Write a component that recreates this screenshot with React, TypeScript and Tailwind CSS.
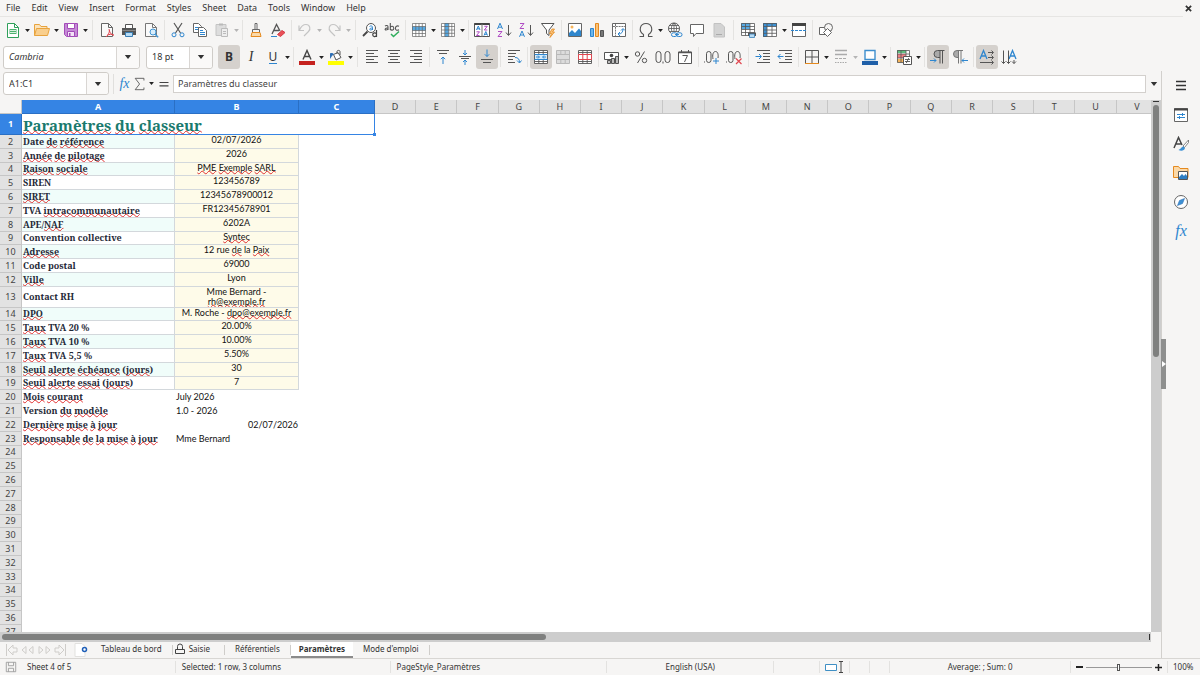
import type { ReactNode } from 'react';

const icons: Record<string, ReactNode> = {
  new: (
    <>
      <path d="M2.5 1.5h7l4 4v10h-11z" fill="#fff" stroke="#2fa05a" />
      <path d="M9.5 1.5v4h4" fill="none" stroke="#2fa05a" />
      <path d="M4.5 7h7v5h-7z" fill="#4db36f" />
      <path d="M5 8.5h6M5 10.5h6" stroke="#d9f2e0" />
    </>
  ),
  open: (
    <>
      <path d="M.5 13.5v-11h5l1.500 2h6v3" fill="#fbe3bb" stroke="#e8a33d" />
      <path d="M.5 13.500l2-7h13l-2 7z" fill="#f9cf8e" stroke="#e8a33d" />
    </>
  ),
  save: (
    <>
      <path d="M1.500 1.500h13v13h-11l-2-2z" fill="#c58ad6" stroke="#a34bb8" />
      <path d="M4.500 1.500h7v5h-7z" fill="#fff" stroke="#a34bb8" />
      <path d="M4.500 9.500h7v5h-7z" fill="#f3e3f7" stroke="#a34bb8" />
      <path d="M6 11h1.500v3H6z" fill="#a34bb8" />
    </>
  ),
  pdf: (
    <>
      <path d="M2.500 1.500h7l4 4v9h-11z" fill="#fafafa" stroke="#666" />
      <path d="M9.500 1.500v4h4" fill="none" stroke="#666" />
      <path d="M10 7c.5 3 1.500 5 4.500 6.500M10.500 8c0 3-1.500 5-3.500 7M8 13.500c2-1.500 5-1.500 7-.5" fill="none" stroke="#e0464f" />
    </>
  ),
  print: (
    <>
      <path d="M4.500 6V2.500h7V6" fill="#fff" stroke="#555" />
      <path d="M1 6h14v7H1z" fill="#555" />
      <path d="M1.500 8.500h13" stroke="#888" />
      <path d="M4.500 10.500h7v4h-7z" fill="#b6dbf5" stroke="#3b7fb5" />
    </>
  ),
  preview: (
    <>
      <path d="M2.500 1.500h7l4 4v9h-11z" fill="#fafafa" stroke="#777" />
      <path d="M9.500 1.500v4h4" fill="none" stroke="#777" />
      <circle cx="10" cy="10" r="3" fill="#d8edfb" stroke="#3f94d4" />
      <path d="M12.200 12.200l3 3" stroke="#3f94d4" strokeWidth="1.400" />
    </>
  ),
  cut: (
    <>
      <path d="M4 1l6.500 10M12 1L5.500 11" fill="none" stroke="#555" strokeWidth="1.200" />
      <circle cx="4" cy="12.800" r="2" fill="none" stroke="#2e86cf" />
      <circle cx="12" cy="12.800" r="2" fill="none" stroke="#2e86cf" />
    </>
  ),
  copy: (
    <>
      <path d="M1.500 1.500h5l3 3v6h-8z" fill="#fff" stroke="#666" />
      <path d="M3 5.500h4M3 7.500h3" stroke="#2e86cf" />
      <path d="M6.500 5.500h5l3 3v6h-8z" fill="#fff" stroke="#666" />
      <path d="M8 8.500h3M8 10.500h5M8 12.500h5" stroke="#2e86cf" />
    </>
  ),
  paste: (
    <>
      <path d="M2 2.500h10v11H2z" fill="#ddd" stroke="#c4c4c4" />
      <path d="M5 1.500h4v2H5z" fill="#b9b9b9" />
      <path d="M7.500 6.500h6v8h-6z" fill="#eee" stroke="#bbb" />
      <path d="M9 9.500h3M9 11.500h3" stroke="#bbb" />
    </>
  ),
  brush: (
    <>
      <path d="M7 1.500h2v6H7z" fill="#fff" stroke="#666" />
      <path d="M4.500 7.500h7v3h-7z" fill="#f3f3f3" stroke="#666" />
      <path d="M4 10.500h8l1 4H3z" fill="#fbd9a8" stroke="#e58a1f" />
    </>
  ),
  clear: (
    <>
      <path d="M2 12L6.500 2.500 10 9M4 8.500h5" fill="none" stroke="#555" strokeWidth="1.300" />
      <path d="M7.500 12.500l4.500-4 3 2-4.500 4z" fill="#ea5058" stroke="#d43c46" />
      <path d="M1 14.500h6" stroke="#2e86cf" />
    </>
  ),
  undo: <path d="M2 3.500v5h5M2.500 8C4 4.500 6.500 2.500 9 2.500c4 0 5 4.500 2.500 7l-4.500 4.500" fill="none" stroke="#c4c4c4" strokeWidth="1.200" />,
  redo: <path d="M14 3.500v5H9M13.500 8C12 4.500 9.500 2.500 7 2.500c-4 0-5 4.500-2.500 7L9 14" fill="none" stroke="#c4c4c4" strokeWidth="1.200" />,
  find: (
    <>
      <circle cx="9" cy="6" r="4.500" fill="#fff" stroke="#555" />
      <path d="M5.500 9.500L1 14" stroke="#444" strokeWidth="1.800" />
      <path d="M7.500 4.500c1-1 3-.8 3 .8V8M10.500 6c-3-.3-3.500 2-1.800 2 1 0 1.800-.8 1.800-1.500" fill="none" stroke="#2e86cf" />
      <path d="M14.500 8v7M14.500 12c-.8-2-3.800-1.200-3.800.8s3 2.500 3.800.5" fill="none" stroke="#444" strokeWidth="1.200" />
    </>
  ),
  spell: (
    <>
      <path d="M1 4c1-.8 3-.8 3 .8V8M4 6C.8 5.700.5 8 2 8c1 0 2-.8 2-1.500M6.300 1v7M6.300 5.500c.7-2 3.500-1.500 3.500.7S7 8.800 6.300 7M15 4.300c-2-1-3.600 0-3.600 2s1.800 2.500 3.600 1.500" fill="none" stroke="#555" strokeWidth="1.100" />
      <path d="M7 12l2.500 2.500L15 9.500" fill="none" stroke="#2fae5c" strokeWidth="1.500" />
    </>
  ),
  rows: (
    <>
      <path d="M1.500 1.500h13v13h-13z" fill="#fff" />
      <path d="M1 4.500h14v4H1z" fill="#57a9e3" />
      <path d="M1.500 1.500h13v13h-13zM1.500 4.500h13M1.500 8.500h13M1.500 11.500h13M4.800 1.500v13M8 1.500v13M11.300 1.500v13" fill="none" stroke="#666" strokeWidth=".7" />
    </>
  ),
  cols: (
    <>
      <path d="M1.500 1.500h13v13h-13z" fill="#fff" />
      <path d="M4.800 1h4v14h-4z" fill="#57a9e3" />
      <path d="M1.500 1.500h13v13h-13zM1.500 4.500h13M1.500 8h13M1.500 11.300h13M4.800 1.500v13M8.800 1.500v13M11.800 1.500v13" fill="none" stroke="#666" strokeWidth=".7" />
    </>
  ),
  sort: (
    <>
      <path d="M.5 1.500h15v13H.5z" fill="#fff" stroke="#555" />
      <path d="M.5 2h15" stroke="#444" strokeWidth="2" />
      <path d="M8 2v13" stroke="#777" />
      <path d="M2.500 8l1.800-4 1.700 4M3 6.800h2.500M10 13.500l1.800-4 1.700 4M10.500 12.300h2.500" fill="none" stroke="#2e86cf" />
      <path d="M2.500 9.800h3l-3 3.700h3M10.300 4.300h3l-3 3.700h3" fill="none" stroke="#b04cc4" />
    </>
  ),
  asc: (
    <>
      <path d="M1.500 7L4 1.200 6.500 7M2.300 5.200h3.400" fill="none" stroke="#2e86cf" />
      <path d="M2 9.500h4L2 14.500h4" fill="none" stroke="#b04cc4" />
      <path d="M12.500 3v10M10 10.500l2.500 3 2.500-3" fill="none" stroke="#555" />
    </>
  ),
  desc: (
    <>
      <path d="M1.500 14.800L4 9l2.500 5.800M2.300 13h3.400" fill="none" stroke="#2e86cf" />
      <path d="M2 1.500h4L2 6.500h4" fill="none" stroke="#b04cc4" />
      <path d="M12.500 3v10M10 10.500l2.500 3 2.500-3" fill="none" stroke="#555" />
    </>
  ),
  filter: (
    <>
      <path d="M1.500 1.500h12.500L9 8v5.500l-2.500-2V8z" fill="#fff" stroke="#555" />
      <path d="M12 7l-2.500 4.500h2L10 15.500l4.500-5.500h-2l2-3z" fill="#f9c27a" stroke="#e58a1f" strokeWidth=".8" />
    </>
  ),
  image: (
    <>
      <path d="M1.500 1.500h13v13h-13z" fill="#fff" stroke="#666" />
      <circle cx="5" cy="5" r="1.500" fill="#f7b55b" />
      <path d="M2 14v-3l3-3 3 3 4-4.500L14 9v5z" fill="#2f86cc" />
    </>
  ),
  chart: (
    <>
      <path d="M1.500 6.500h3v8h-3z" fill="#6db6ea" stroke="#2e86cf" />
      <path d="M6.500 1.500h3v13h-3z" fill="#f9c27a" stroke="#e58a1f" />
      <path d="M11.500 8.500h3v6h-3z" fill="#777" stroke="#555" />
    </>
  ),
  pivot: (
    <>
      <path d="M1.500 1.500h13v13h-13z" fill="#fff" stroke="#666" />
      <path d="M2 4.500h12M4.500 2v12" stroke="#777" strokeDasharray="2 .8" />
      <path d="M7.500 12c3 0 4.500-2 4.500-5M9 10l-2 2 2 2M10 8.500l2-2 2 2" fill="none" stroke="#2e86cf" />
    </>
  ),
  omega: <path d="M1.500 14.500h4v-2C0 9 2 1.500 8 1.500S16 9 10.500 12.500v2h4" fill="none" stroke="#555" strokeWidth="1.100" />,
  link: (
    <>
      <circle cx="7" cy="6.500" r="5.500" fill="#fff" stroke="#555" />
      <path d="M1.500 6.500h11M2.500 3.500h9M2.500 9.500h9M7 1v11M7 1C3.500 4 3.500 9 7 12M7 1c3.500 3 3.500 8 0 11" fill="none" stroke="#555" strokeWidth=".8" />
      <path d="M4 10h11v6H4z" fill="#f6f5f4" />
      <rect x="4.500" y="10.800" width="5.500" height="3.700" rx="1.800" fill="none" stroke="#2e86cf" />
      <rect x="9.500" y="10.800" width="5.500" height="3.700" rx="1.800" fill="none" stroke="#2e86cf" />
      <path d="M8 12.600h4" stroke="#2e86cf" />
    </>
  ),
  comment: <path d="M1.500 2.500h13v9H7l-2.500 3v-3h-3z" fill="#fff" stroke="#666" />,
  header: (
    <>
      <path d="M3 1.500h7l3.500 3.500v10H3z" fill="#d3d3d3" stroke="#c2c2c2" />
      <path d="M5 12.500h6" stroke="#aaa" />
    </>
  ),
  printRange: (
    <>
      <path d="M1.500 1.500h13v12h-13z" fill="#fff" />
      <path d="M1 1h9v6H1z" fill="#57a9e3" />
      <path d="M1.500 1.500h13v12h-13zM1.500 4.500h13M1.500 7.500h13M1.500 10.500h13M5.500 1.500v12M10 1.500v12" fill="none" stroke="#555" strokeWidth=".8" />
      <path d="M8 10.500h8v3.500H8z" fill="#555" />
      <path d="M9.500 12h5v3.500h-5z" fill="#b6dbf5" stroke="#3b7fb5" strokeWidth=".8" />
    </>
  ),
  freeze: (
    <>
      <path d="M1.500 1.500h13v13h-13z" fill="#fff" />
      <path d="M1 1h14v3.500H5V15H1z" fill="#3d91d4" />
      <path d="M1.500 1.500h13v13h-13zM1.500 4.500h13M1.500 8h13M1.500 11.300h13M5 1.500v13M10 1.500v13" fill="none" stroke="#555" strokeWidth=".8" />
    </>
  ),
  split: (
    <>
      <path d="M1.500 1.500h13v13h-13z" fill="#fff" stroke="#666" />
      <path d="M1 2.500h14" stroke="#444" strokeWidth="3" />
      <path d="M0 8.500h16" stroke="#2e86cf" strokeDasharray="3 1" />
    </>
  ),
  shapes: (
    <>
      <path d="M1.500 5.500h6v7h-6z" fill="#fff" stroke="#666" />
      <circle cx="10.500" cy="5.500" r="4" fill="#f6f5f4" stroke="#666" />
      <path d="M9.500 6.500l4 4-4 4-4-4z" fill="#fff" stroke="#666" />
    </>
  ),
  fontColor: (
    <>
      <path d="M4 10.500L8 1.500l4 9M5.300 7.500h5.400" fill="none" stroke="#444" strokeWidth="1.400" />
      <path d="M0 12h16v4H0z" fill="#c5221f" />
    </>
  ),
  fill: (
    <>
      <path d="M5.500 5.500l4.500-2 3 5-5 2.500z" fill="#fff" stroke="#555" />
      <path d="M9 5V2.500c0-1.500 3-1.500 3 0V6" fill="none" stroke="#555" />
      <path d="M2 10V4.500c1.500-1 3 0 4 .5L4 7z" fill="#2e6fb5" />
      <path d="M0 12h16v4H0z" fill="#ffff00" />
    </>
  ),
  left: <path d="M2 1.500h12M2 4.500h8M2 7.500h12M2 10.500h8M2 13.500h12" stroke="#555" />,
  center: <path d="M2 1.500h12M4 4.500h8M2 7.500h12M4 10.500h8M2 13.500h12" stroke="#555" />,
  right: <path d="M2 1.500h12M6 4.500h8M2 7.500h12M6 10.500h8M2 13.500h12" stroke="#555" />,
  top: (
    <>
      <path d="M2 1.500h12M4 4.500h8" stroke="#555" />
      <path d="M8 15V8M5.800 10.200L8 8l2.200 2.200" fill="none" stroke="#2e86cf" />
    </>
  ),
  middle: (
    <>
      <path d="M2 7.500h12M4 9.500h8" stroke="#555" />
      <path d="M8 1v5M6 4l2 2 2-2M8 16v-5M6 13l2-2 2 2" fill="none" stroke="#2e86cf" />
    </>
  ),
  bottom: (
    <>
      <path d="M2 10.500h12M4 13.500h8" stroke="#555" />
      <path d="M8 .5v7M5.800 5.300L8 7.500l2.200-2.200" fill="none" stroke="#2e86cf" />
    </>
  ),
  wrap: (
    <>
      <path d="M2 1.500h12M2 4.500h8M2 7.500h7M2 10.500h5M2 13.500h7" stroke="#555" />
      <path d="M9 8.500c3 0 4.500 1.500 4.500 5M11 11.500l2.500 2.500 2-2.500" fill="none" stroke="#2e86cf" />
    </>
  ),
  merge: (
    <>
      <path d="M1.500 1.500h13v13h-13z" fill="#fff" />
      <path d="M1 5.500h14v5H1z" fill="#d6ebfa" />
      <path d="M1.500 1.500h13v13h-13zM5.800 1.500v4M10.200 1.500v4M5.800 10.500v4M10.200 10.500v4M1.500 3.500h13M1.500 12.500h13" fill="none" stroke="#555" strokeWidth=".9" />
      <path d="M1.500 5.500h13M1.500 10.500h13M3 8h3M13 8h-3M5 6.500L6.500 8 5 9.500M11 6.500L9.500 8l1.500 1.500" fill="none" stroke="#2e86cf" />
    </>
  ),
  mergeOff: (
    <path d="M1.500 1.500h13v13h-13zM1.500 5.500h13M1.500 10.500h13M5.800 1.500v4M10.200 1.500v4M5.800 10.500v4M10.200 10.500v4" fill="#dcdcdc" stroke="#b9b9b9" />
  ),
  unmerge: (
    <>
      <path d="M1.500 1.500h13v13h-13zM5.800 1.500v4M10.200 1.500v4M5.800 10.500v4M10.200 10.500v4M1.500 3.500h13M1.500 12.500h13" fill="#fff" stroke="#555" strokeWidth=".9" />
      <path d="M1.500 5.500h13v5h-13zM5.800 5.500v5M10.200 5.500v5" fill="#fff" stroke="#e0464f" />
    </>
  ),
  currency: (
    <>
      <path d="M.5 3.500h14v7H.5z" fill="#fff" stroke="#555" />
      <circle cx="7.500" cy="6.500" r="1.800" fill="#444" />
      <path d="M3.500 11.500h3v3h-3zM7.500 9.500h3v5h-3zM11.500 7.500h3v7h-3z" fill="#bbb" stroke="#444" strokeWidth=".9" />
    </>
  ),
  percent: (
    <>
      <circle cx="4.500" cy="5" r="2.200" fill="none" stroke="#555" />
      <circle cx="11.500" cy="11.500" r="2.200" fill="none" stroke="#555" />
      <path d="M11.500 2.500l-7 11.500" stroke="#555" />
    </>
  ),
  number: (
    <>
      <rect x="1" y="2.500" width="5" height="11" rx="2.500" fill="none" stroke="#555" />
      <rect x="10" y="2.500" width="5" height="11" rx="2.500" fill="none" stroke="#555" />
      <path d="M7.500 12.500h1v2h-1z" fill="#555" />
    </>
  ),
  date: (
    <>
      <path d="M1.500 3h13v11.500h-13z" fill="#fff" stroke="#555" />
      <path d="M1.500 3.500h13" stroke="#555" strokeWidth="1.500" />
      <path d="M4.500 1v3M11.500 1v3" stroke="#555" />
      <path d="M5.500 6.500h5l-3 6.500" fill="none" stroke="#555" />
    </>
  ),
  addDecimal: (
    <>
      <path d="M0 12.500h1v1H0z" fill="#555" />
      <rect x="2.500" y="2.500" width="4.500" height="11" rx="2.200" fill="none" stroke="#555" />
      <path d="M9 10c-.8-4 0-7.500 2.500-7.500S14.500 6 14 9" fill="none" stroke="#555" />
      <path d="M12 9v6M9 12h6" stroke="#2e86cf" />
    </>
  ),
  delDecimal: (
    <>
      <path d="M0 12.500h1v1H0z" fill="#555" />
      <rect x="2.500" y="2.500" width="4.500" height="11" rx="2.200" fill="none" stroke="#555" />
      <path d="M9 10c-.8-4 0-7.500 2.500-7.500S14.500 6 14 9" fill="none" stroke="#555" />
      <path d="M10 9.500l5.500 5.500M15.500 9.500L10 15" stroke="#e0464f" strokeWidth="1.200" />
    </>
  ),
  indent: (
    <>
      <path d="M2 1.500h13M8 4.500h7M8 7.500h7M8 10.500h7M2 13.500h13" stroke="#555" />
      <path d="M.5 7.500h5.500M4 5l2.500 2.500L4 10" fill="none" stroke="#2e86cf" />
    </>
  ),
  outdent: (
    <>
      <path d="M2 1.500h13M8 4.500h7M8 7.500h7M8 10.500h7M2 13.500h13" stroke="#555" />
      <path d="M6.500 7.500H1M3.500 5L1 7.500 3.500 10" fill="none" stroke="#2e86cf" />
    </>
  ),
  borders: (
    <>
      <path d="M1.500 14.500v-13h13v13M8 1.500v13M1.500 8h13" fill="none" stroke="#555" />
      <path d="M1 14.500h14" stroke="#e58a1f" />
    </>
  ),
  lineStyle: (
    <>
      <path d="M2 1.500h12M2 5.500h12" stroke="#aaa" strokeWidth="1.400" />
      <path d="M2 9.500h12" stroke="#aaa" strokeDasharray="3 1" />
      <path d="M2 13.500h12" stroke="#aaa" strokeDasharray="1.500 1" />
    </>
  ),
  borderColor: (
    <>
      <path d="M3 1.500h10v9H3z" fill="#fff" stroke="#3f8fce" strokeWidth="1.400" />
      <path d="M0 12h16v4H0z" fill="#1f5fa8" />
    </>
  ),
  conditional: (
    <>
      <path d="M1.500 1.500h12v12h-12z" fill="#fff" />
      <path d="M1 1h9v3H1z" fill="#5fbf7f" />
      <path d="M1 5h9v4H1z" fill="#ec7f84" />
      <path d="M1 10h6v3.500H1z" fill="#f7b55b" />
      <path d="M1.500 1.500h12v12h-12zM1.500 5h12M1.500 9h12M5 1.500v12M10 1.500v12" fill="none" stroke="#555" strokeWidth=".8" />
      <path d="M7.500 7.500h8v8h-8z" fill="#fff" stroke="#555" />
      <path d="M9 10.500h5M9 12.500h5M12.800 9l-2.500 5" stroke="#555" strokeWidth=".9" />
    </>
  ),
  ltr: (
    <>
      <path d="M10 1.500H7.500a3.500 3.500 0 000 7H10z" fill="#aaa" />
      <path d="M14.500 1.500H7.500a3.500 3.500 0 000 7H10M10 1.500v13M12.500 1.500v13" fill="none" stroke="#555" />
      <path d="M0 11.500h6M4 9.500l2 2-2 2" fill="none" stroke="#2e86cf" />
    </>
  ),
  rtl: (
    <>
      <path d="M6.500 1.500H5a3.500 3.500 0 000 7h1.500z" fill="#aaa" />
      <path d="M11 1.500H5a3.500 3.500 0 000 7h1.500M6.500 1.500v13M9 1.500v13" fill="none" stroke="#777" />
      <path d="M16 11.500h-6M12 9.500l-2 2 2 2" fill="none" stroke="#2e86cf" />
    </>
  ),
  textLtr: (
    <>
      <path d="M1 10L4.500 1.500 8 10M2.300 7h4.400" fill="none" stroke="#2e86cf" strokeWidth="1.300" />
      <path d="M9 3.500h5M12.500 1.500l2 2-2 2M9 8.500h5M12.500 6.500l2 2-2 2M1 13.500h13M12.500 11.500l2 2-2 2" fill="none" stroke="#555" />
    </>
  ),
  textTtb: (
    <>
      <path d="M8 10l3.500-8.500L15 10M9.300 7h4.400" fill="none" stroke="#2e86cf" strokeWidth="1.300" />
      <path d="M2.500 1.500v13M.5 12.500l2 2 2-2M7.500 1.500v13M5.500 12.500l2 2 2-2M13 11v3.500M11 12.500l2 2 2-2" fill="none" stroke="#555" />
    </>
  ),
  sum: <path d="M12.500 4V1.500h-10l5 6.500-5 6.500h10V12" fill="none" stroke="#555" />,
  equals: <path d="M2 6h12M2 10.500h12" stroke="#444" strokeWidth="1.600" />,
  menu: <path d="M3 3.500h10M3 7.500h10M3 11.500h10" stroke="#333" strokeWidth="1.500" />,
  properties: (
    <>
      <path d="M1.500 1.500h13v13h-13z" fill="#fff" stroke="#666" />
      <path d="M1 2.500h14" stroke="#444" strokeWidth="2" />
      <path d="M4 7.500h8M9.500 6v3M4 10.500h8M6.500 9v3" stroke="#2e86cf" />
    </>
  ),
  styles: (
    <>
      <path d="M1 12L5.500 1.500 9 9M2.800 8h5" fill="none" stroke="#444" strokeWidth="1.500" />
      <path d="M15.500 4L10 10l1.500 1.500 4-5z" fill="#fff" stroke="#666" strokeWidth=".8" />
      <path d="M10.500 10.500c-2 0-2.500 2.500-5 3.500 3 1.500 6 .5 6.500-2z" fill="#3d91d4" />
    </>
  ),
  gallery: (
    <>
      <path d="M.5 12.500v-11h5l1.500 2h8v9z" fill="#fbd9a8" stroke="#e58a1f" />
      <path d="M5.500 6.500h9v8h-9z" fill="#fff" stroke="#555" />
      <path d="M6 14v-2l3-3 2 2 1.500-2L14 11v3z" fill="#2f7fc4" />
    </>
  ),
  navigator: (
    <>
      <circle cx="8" cy="8" r="6.500" fill="#fff" stroke="#666" />
      <path d="M11.500 4.500L9.500 9.500l-5 2 2-5z" fill="#3d91d4" stroke="#2e6fb5" strokeWidth=".6" />
    </>
  ),
};

function Icon({ name }: { name: string }) {
  return (
    <svg viewBox="0 0 16 16" className="size-4 shrink-0" aria-hidden="true">
      {icons[name]}
    </svg>
  );
}

function Caret({ muted = false }: { muted?: boolean }) {
  return (
    <svg viewBox="0 0 8 5" className="h-[3px] w-[5px]" aria-hidden="true">
      <path d="M0 0h8L4 5z" fill={muted ? '#b5b5b5' : '#222'} />
    </svg>
  );
}

// "|" is a wide separator, "." a narrow one, "v" / "x" an enabled / disabled arrow
const standardBar =
  'new v open v save v | pdf print preview . cut copy paste x . brush clear . undo x redo x | find spell . rows v cols v . sort asc desc filter . image chart pivot . omega v link comment header | printRange freeze v split . shapes';
const formatBar =
  'fontColor v fill v | left center right . top middle *bottom . wrap . *merge mergeOff unmerge . currency v percent number date . addDecimal delDecimal | indent outdent . borders v lineStyle x borderColor v . conditional v . *ltr rtl . *textLtr textTtb';

function ToolItems({ spec }: { spec: string }) {
  return spec.split(' ').map((item, i) => {
    if (item === '|' || item === '.') {
      return (
        <span key={i} className={`flex h-5 shrink-0 justify-center ${item === '|' ? 'w-[7px]' : 'w-[5px]'}`}>
          <span className="w-px bg-[#e4e3e1]" />
        </span>
      );
    }
    if (item === 'v' || item === 'x') {
      return (
        <button key={i} aria-label="More options" disabled={item === 'x'} className="flex h-5 w-[7px] shrink-0 items-center justify-center">
          <Caret muted={item === 'x'} />
        </button>
      );
    }
    const active = item.startsWith('*');
    const name = item.replace('*', '');
    return (
      <button
        key={i}
        aria-label={name}
        className={`flex h-6 w-[22px] shrink-0 items-center justify-center rounded-[3px] ${active ? 'bg-[#d5d1cd]' : ''}`}
      >
        <Icon name={name} />
      </button>
    );
  });
}

function Combo({ label, value, className, textClass = '' }: { label: string; value: string; className: string; textClass?: string }) {
  return (
    <label className={`relative flex h-[23px] shrink-0 items-center rounded-[3px] border border-[#cfccc8] bg-white ${className}`}>
      <select aria-label={label} className={`size-full appearance-none bg-transparent pl-[5px] outline-none ${textClass}`}>
        <option>{value}</option>
      </select>
      <span className="pointer-events-none absolute inset-y-0 right-0 flex w-[23px] items-center justify-center rounded-r-[3px] border-l border-[#d9d6d3] bg-[#faf9f8]">
        <svg viewBox="0 0 8 5" className="h-1 w-2"><path d="M0 0h8L4 5z" fill="#333" /></svg>
      </span>
    </label>
  );
}

// words between asterisks are unknown to the spell checker
function Spelled({ text }: { text: string }) {
  return text.split('*').map((part, i) =>
    i % 2 ? (
      <span key={i} className="underline decoration-[#e03030] decoration-wavy decoration-[1px] -underline-offset-1 [text-decoration-skip-ink:none]">
        {part}
      </span>
    ) : (
      part
    ),
  );
}

const rows: [string, string][] = [
  ['Date *de* *référence*', '02/07/2026'],
  ['*Année* *de* *pilotage*', '2026'],
  ['*Raison* *sociale*', '*PME* *Exemple* *SARL*'],
  ['SIREN', '123456789'],
  ['*SIRET*', '12345678900012'],
  ['TVA *intracommunautaire*', 'FR12345678901'],
  ['APE/*NAF*', '6202A'],
  ['Convention collective', '*Syntec*'],
  ['*Adresse*', '12 rue *de* la *Paix*'],
  ['Code postal', '69000'],
  ['*Ville*', 'Lyon'],
  ['Contact RH', 'Mme Bernard - *rh@exemple.fr*'],
  ['*DPO*', 'M. Roche - *dpo@exemple.fr*'],
  ['*Taux* TVA 20 %', '20.00%'],
  ['*Taux* TVA 10 %', '10.00%'],
  ['*Taux* TVA 5,5 %', '5.50%'],
  ['*Seuil* *alerte* *échéance* (*jours*)', '30'],
  ['*Seuil* *alerte* *essai* (*jours*)', '7'],
  ['*Mois* *courant*', 'July 2026'],
  ['Version *du* *modèle*', '1.0 - 2026'],
  ['*Dernière* *mise* *à* *jour*', '02/07/2026'],
  ['*Responsable* *de* *la* *mise* *à* *jour*', 'Mme Bernard'],
];

const columns = 'ABCDEFGHIJKLMNOPQRSTUV'.split('');
const menus = ['File', 'Edit', 'View', 'Insert', 'Format', 'Styles', 'Sheet', 'Data', 'Tools', 'Window', 'Help'];
const rowHead = 'border-r border-b border-[#c6c6c6] bg-[#e2e2e2] p-0 text-center font-normal text-[#444]';

function rowHeight(n: number) {
  if (n === 13) return 'h-[21px]';
  return n % 5 === 4 ? 'h-[13px]' : 'h-[14px]';
}

function Sheet() {
  return (
    <div className="min-w-0 flex-1 overflow-hidden bg-white">
      <table className="w-[calc(100%+7px)] table-fixed border-separate border-spacing-0 leading-[12px]">
        <colgroup>
          <col className="w-[22px]" />
          <col className="w-[153px]" />
          <col className="w-[124px]" />
          <col className="w-[76px]" />
        </colgroup>
        <thead>
          <tr className="h-[14px]">
            <th className="border-r border-b border-[#c6c6c6] bg-[#f6f5f4] p-0" />
            {columns.map((c, i) => (
              <th
                key={c}
                className={`border-r border-b p-0 text-center ${
                  i < 3 ? 'border-[#2a6fc4] bg-[#3584e4] font-bold text-white' : 'border-[#c6c6c6] bg-[#e2e2e2] font-normal text-[#444]'
                }`}
              >
                {c}
              </th>
            ))}
          </tr>
        </thead>
        <tbody>
          <tr className="h-[21px]">
            <th className="border-r border-b border-[#2a6fc4] bg-[#3584e4] p-0 text-center font-bold text-white">1</th>
            <td
              colSpan={3}
              className="relative border-r border-b border-[#3584e4] p-0 pl-px align-bottom font-['Noto_Serif','DejaVu_Serif_Condensed','DejaVu_Serif',serif] text-[15px] leading-[18px] font-bold text-[#1a7a6e]"
            >
              <Spelled text="*Paramètres* *du* *classeur*" />
              <span className="absolute -right-0.5 -bottom-0.5 size-[3px] bg-[#3584e4]" />
            </td>
            <td colSpan={19} />
          </tr>
          {rows.map(([label, value], i) => {
            const n = i + 2;
            const boxed = n < 20;
            return (
              <tr key={n} className={rowHeight(n)}>
                <th className={rowHead}>{n}</th>
                <td
                  className={`overflow-hidden p-0 pl-px align-middle font-['Noto_Serif','DejaVu_Serif_Condensed','DejaVu_Serif',serif] text-[9px] font-bold whitespace-nowrap text-[#1f2937] ${
                    boxed ? 'border-r border-b border-[#d3d8dc]' : ''
                  } ${boxed && n % 2 === 0 ? 'bg-[#f0fdfa]' : ''}`}
                >
                  <Spelled text={label} />
                </td>
                <td
                  className={`overflow-hidden py-0 font-['Lato',sans-serif] text-[9px] leading-[10px] text-[#111] ${
                    boxed ? 'border-r border-b border-[#d3d8dc] bg-[#fefbe9] text-center align-top' : 'align-middle'
                  } ${n === 22 ? 'text-right' : ''} ${n === 13 ? 'px-6' : 'px-px whitespace-nowrap'}`}
                >
                  <Spelled text={value} />
                </td>
                <td colSpan={20} />
              </tr>
            );
          })}
          {Array.from({ length: 14 }, (_, i) => i + 24).map((n) => (
            <tr key={n} className={rowHeight(n)}>
              <th className={rowHead}>{n}</th>
              <td colSpan={22} />
            </tr>
          ))}
        </tbody>
      </table>
    </div>
  );
}

function SheetTab({ name, active = false, locked = false }: { name: string; active?: boolean; locked?: boolean }) {
  return (
    <button
      role="tab"
      aria-selected={active}
      className={`flex h-full items-center gap-1 border-b-2 ${
        active ? 'border-[#8b8b8b] bg-white font-bold text-[#333]' : 'border-transparent'
      } ${locked ? 'pr-3.5 pl-0.5' : active ? 'px-2' : 'px-2.5'}`}
    >
      {locked && (
        <svg viewBox="0 0 10 12" className="h-3 w-2.5" aria-hidden="true">
          <path d="M.5 6.500h9v4h-9zM2.500 6.500v-3a2.500 2.500 0 015 0v3" fill="none" stroke="#444" />
        </svg>
      )}
      {name}
    </button>
  );
}

function TabSep() {
  return <span className="h-2.5 w-px bg-[#cfcdca]" />;
}

function App() {
  return (
    <div className="flex h-screen flex-col overflow-hidden bg-[#f6f5f4] font-['Noto_Sans',sans-serif] text-[9px] text-[#333]">
      <div className="flex h-[17px] shrink-0 items-center pr-2">
        <nav className="flex h-full flex-1 items-center gap-[11px] border-b border-[#e6e5e3] pl-[6px]">
          {menus.map((m) => (
            <button key={m}>{m}</button>
          ))}
        </nav>
        <button aria-label="Close" className="ml-0.5">
          <svg viewBox="0 0 8 8" className="size-[7px]"><path d="M1 1l6 6M7 1L1 7" stroke="#333" strokeWidth="2" /></svg>
        </button>
      </div>

      <div className="flex h-[26px] shrink-0 items-center pl-0.5">
        <ToolItems spec={standardBar} />
      </div>

      <div className="flex h-7 shrink-0 items-center pl-[3px]">
        <Combo label="Font name" value="Cambria" className="w-[137px]" textClass="italic" />
        <Combo label="Font size" value="18 pt" className="ml-[6px] w-[67px]" />
        <span className="w-[5px]" />
        <button aria-label="Bold" className="h-6 w-[22px] shrink-0 rounded-[3px] bg-[#d5d1cd] text-[12px] leading-6 font-bold">B</button>
        <button aria-label="Italic" className="h-6 w-[22px] shrink-0 font-['Liberation_Serif',serif] text-[14px] leading-6 italic">I</button>
        <button aria-label="Underline" className="flex h-6 w-[22px] shrink-0 items-center justify-center text-[12px]">
          <span className="border-b border-[#2e86cf] leading-[13px]">U</span>
        </button>
        <ToolItems spec="v ." />
        <ToolItems spec={formatBar} />
      </div>

      <div className="flex min-h-0 flex-1">
        <div className="flex min-w-0 flex-1 flex-col">
          <div className="flex h-[29px] shrink-0 items-center pb-1 pl-[3px]">
            <div className="flex h-[23px] w-[106px] shrink-0 items-center rounded-[3px] border border-[#cfccc8] bg-white">
              <input aria-label="Name box" defaultValue="A1:C1" className="h-full w-[82px] pl-[5px] outline-none" />
              <button aria-label="Named ranges" className="flex h-full w-[23px] items-center justify-center rounded-r-[3px] border-l border-[#d9d6d3] bg-[#faf9f8]">
                <svg viewBox="0 0 8 5" className="h-1 w-2"><path d="M0 0h8L4 5z" fill="#333" /></svg>
              </button>
            </div>
            <span className="mr-[3px] ml-1 h-5 w-px bg-[#e0dfdd]" />
            <button aria-label="Function wizard" className="w-[15px] font-['Liberation_Serif',serif] text-[14px] leading-5 text-[#2e86cf] italic">fx</button>
            <button aria-label="Sum" className="flex size-4 items-center justify-center">
              <svg viewBox="0 0 16 16" className="size-3.5">{icons.sum}</svg>
            </button>
            <ToolItems spec="v" />
            <button aria-label="Formula" className="flex w-[18px] justify-center">
              <svg viewBox="0 0 16 16" className="size-3">{icons.equals}</svg>
            </button>
            <input
              aria-label="Input line"
              defaultValue="Paramètres du classeur"
              className="h-[18px] min-w-0 flex-1 border border-[#d3d0cd] bg-white pl-1 text-[#444] outline-none"
            />
            <button aria-label="Expand input line" className="flex w-[15px] justify-center">
              <svg viewBox="0 0 8 5" className="h-1 w-2"><path d="M0 0h8L4 5z" fill="#333" /></svg>
            </button>
          </div>

          <div className="flex min-h-0 flex-1">
            <Sheet />
            <div className="flex w-2.5 shrink-0 flex-col items-center bg-[#cdcdcd]">
              <span className="my-px h-px w-1.5 bg-[#333]" />
              <span className="mt-0.5 h-[47.400%] w-1.5 rounded-full bg-[#7f807f]" />
            </div>
          </div>

          <div className="mr-2.5 flex h-2.5 shrink-0 items-center bg-[#cdcdcd] pr-px pl-0.5">
            <span className="h-1.5 w-[47.400%] rounded-full bg-[#7f807f]" />
            <span className="ml-auto h-1.5 w-px bg-[#333]" />
          </div>

          <div role="tablist" className="flex h-4 shrink-0 items-center text-[8px]">
            <svg viewBox="0 0 60 12" className="ml-1.5 h-3 w-[60px]" aria-hidden="true">
              <path
                d="M.5 0v12M7 1L2 6l5 5V8h4V4H7zM20 2.500l-4 3.500 4 3.500zM27 2.500l-4 3.500 4 3.500zM33 2.500l4 3.500-4 3.500zM40 2.500l4 3.500-4 3.500zM53 1l5 5-5 5V8h-4V4h4zM59.500 0v12"
                fill="none"
                stroke="#cfcdca"
              />
            </svg>
            <button aria-label="Add sheet" className="mr-[3px] ml-2">
              <svg viewBox="0 0 14 14" className="size-3.5">
                <path d="M1 .5h7l3 3v10H1z" fill="#fff" stroke="#e2e1df" />
                <circle cx="10.500" cy="6.500" r="2" fill="#fff" stroke="#1f5fb8" strokeWidth="1.500" />
              </svg>
            </button>
            <SheetTab name="Tableau de bord" />
            <TabSep />
            <SheetTab name="Saisie" locked />
            <TabSep />
            <SheetTab name="Référentiels" />
            <TabSep />
            <SheetTab name="Paramètres" active />
            <SheetTab name="Mode d'emploi" />
            <TabSep />
          </div>
        </div>

        <aside className="relative flex w-[39px] shrink-0 flex-col items-center gap-[5px] border-l border-[#d2d0cd] pt-[3px]">
          {['menu', 'properties', 'styles', 'gallery', 'navigator'].map((name) => (
            <button key={name} aria-label={name} className="flex size-6 items-center justify-center">
              <Icon name={name} />
            </button>
          ))}
          <button aria-label="Functions" className="size-6 font-['Liberation_Serif',serif] text-[16px] leading-6 text-[#2e86cf] italic">fx</button>
          <span className="absolute top-[268px] -left-px flex h-[50px] w-[5px] items-center justify-center bg-[#8e8f8e]">
            <svg viewBox="0 0 4 6" className="h-1.5 w-1"><path d="M0 0l4 3-4 3z" fill="#fff" /></svg>
          </span>
        </aside>
      </div>

      <footer className="flex h-[17px] shrink-0 items-center border-t border-[#d8d6d3] text-[8px]">
        <svg viewBox="0 0 14 14" className="mx-[5px] size-3" aria-hidden="true">
          <path d="M1.500 1.500h11v11h-11zM4 1.500v4h6v-4M4 12.500v-4h6v4" fill="none" stroke="#999" />
        </svg>
        <span className="flex-[148] border-r border-[#e3e2e0] pl-[5px]">Sheet 4 of 5</span>
        <span className="flex-[208] border-r border-[#e3e2e0] pl-[6px]">Selected: 1 row, 3 columns</span>
        <span className="flex-[210] border-r border-[#e3e2e0] pl-[6px]">PageStyle_Paramètres</span>
        <span className="flex-[166] border-r border-[#e3e2e0] text-center">English (USA)</span>
        <span className="h-3 w-[46px] border-r border-[#e3e2e0]" />
        <span className="flex h-3 w-[30px] items-center justify-center border-r border-[#e3e2e0]">
          <svg viewBox="0 0 20 12" className="h-3 w-5">
            <path d="M.5 3.500h11v6H.5z" fill="#fff" stroke="#3f8fc4" />
            <path d="M14 .5h4M14 11.500h4M16 .5v11" stroke="#444" />
          </svg>
        </span>
        <span className="h-3 w-5 border-r border-[#e3e2e0]" />
        <span className="h-3 w-5 border-r border-[#e3e2e0]" />
        <span className="flex-[180] border-r border-[#e3e2e0] text-center">Average: ; Sum: 0</span>
        <div className="flex w-24 items-center justify-center gap-[3px]">
          <button aria-label="Zoom out" className="h-0.5 w-[7px] bg-[#222]" />
          <input
            type="range"
            aria-label="Zoom"
            defaultValue={50}
            className="h-2 w-[66px] appearance-none bg-[linear-gradient(#999,#999)] bg-[length:100%_1px] bg-center bg-no-repeat [&::-webkit-slider-thumb]:h-[7px] [&::-webkit-slider-thumb]:w-[3px] [&::-webkit-slider-thumb]:appearance-none [&::-webkit-slider-thumb]:border [&::-webkit-slider-thumb]:border-[#555] [&::-webkit-slider-thumb]:bg-white"
          />
          <button aria-label="Zoom in">
            <svg viewBox="0 0 7 7" className="size-[7px]"><path d="M0 3.500h7M3.500 0v7" stroke="#222" strokeWidth="1.500" /></svg>
          </button>
        </div>
        <span className="w-[33px] border-l border-[#e3e2e0] pl-[5px]">100%</span>
      </footer>
    </div>
  );
}

export default App;
